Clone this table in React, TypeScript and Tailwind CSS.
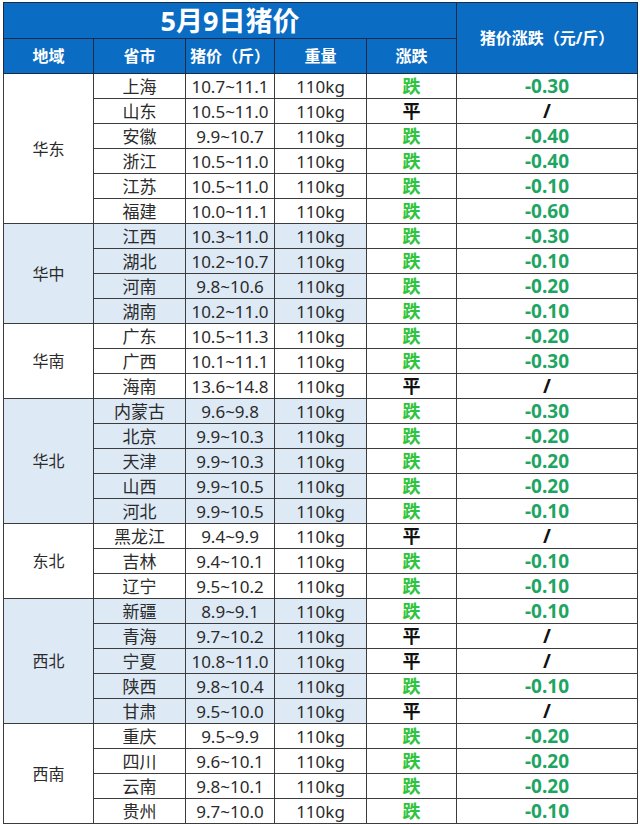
import React from 'react';

type Row = [string, string, boolean, string];

interface Region {
  name: string;
  shaded: boolean;
  rows: Row[];
}

// [province, price range, fell?, change]
const regions: Region[] = [
  {
    name: '华东',
    shaded: false,
    rows: [
      ['上海', '10.7~11.1', true, '-0.30'],
      ['山东', '10.5~11.0', false, '/'],
      ['安徽', '9.9~10.7', true, '-0.40'],
      ['浙江', '10.5~11.0', true, '-0.40'],
      ['江苏', '10.5~11.0', true, '-0.10'],
      ['福建', '10.0~11.1', true, '-0.60'],
    ],
  },
  {
    name: '华中',
    shaded: true,
    rows: [
      ['江西', '10.3~11.0', true, '-0.30'],
      ['湖北', '10.2~10.7', true, '-0.10'],
      ['河南', '9.8~10.6', true, '-0.20'],
      ['湖南', '10.2~11.0', true, '-0.10'],
    ],
  },
  {
    name: '华南',
    shaded: false,
    rows: [
      ['广东', '10.5~11.3', true, '-0.20'],
      ['广西', '10.1~11.1', true, '-0.30'],
      ['海南', '13.6~14.8', false, '/'],
    ],
  },
  {
    name: '华北',
    shaded: true,
    rows: [
      ['内蒙古', '9.6~9.8', true, '-0.30'],
      ['北京', '9.9~10.3', true, '-0.20'],
      ['天津', '9.9~10.3', true, '-0.20'],
      ['山西', '9.9~10.5', true, '-0.20'],
      ['河北', '9.9~10.5', true, '-0.10'],
    ],
  },
  {
    name: '东北',
    shaded: false,
    rows: [
      ['黑龙江', '9.4~9.9', false, '/'],
      ['吉林', '9.4~10.1', true, '-0.10'],
      ['辽宁', '9.5~10.2', true, '-0.10'],
    ],
  },
  {
    name: '西北',
    shaded: true,
    rows: [
      ['新疆', '8.9~9.1', true, '-0.10'],
      ['青海', '9.7~10.2', false, '/'],
      ['宁夏', '10.8~11.0', false, '/'],
      ['陕西', '9.8~10.4', true, '-0.10'],
      ['甘肃', '9.5~10.0', false, '/'],
    ],
  },
  {
    name: '西南',
    shaded: false,
    rows: [
      ['重庆', '9.5~9.9', true, '-0.20'],
      ['四川', '9.6~10.1', true, '-0.20'],
      ['云南', '9.8~10.1', true, '-0.20'],
      ['贵州', '9.7~10.0', true, '-0.10'],
    ],
  },
];

const font = { fontFamily: '"Noto Sans", "Noto Sans CJK SC", sans-serif' };

const App: React.FC = () => {
  return (
    <div className="w-[640px] h-[825px] bg-white pl-[3px] pt-[2px] overflow-hidden" style={font}>
      <table className="table-fixed border-collapse w-[634px] text-center">
        <colgroup>
          <col className="w-[90px]" />
          <col className="w-[92px]" />
          <col className="w-[89px]" />
          <col className="w-[92px]" />
          <col className="w-[90px]" />
          <col className="w-[181px]" />
        </colgroup>
        <thead>
          <tr className="h-[36px]">
            <th colSpan={5} className="bg-[#0b6cc4] border border-[#1e2a44] p-0 text-white text-[27px] font-bold leading-none">
              5月9日猪价
            </th>
            <th rowSpan={2} className="bg-[#0b6cc4] border border-[#1e2a44] p-0 text-white text-[16px] font-bold leading-none">
              猪价涨跌（元/斤）
            </th>
          </tr>
          <tr className="h-[35px] text-white text-[16px] font-bold">
            <th className="bg-[#0b6cc4] border border-[#1e2a44] p-0">地域</th>
            <th className="bg-[#0b6cc4] border border-[#1e2a44] p-0">省市</th>
            <th className="bg-[#0b6cc4] border border-[#1e2a44] p-0">猪价（斤）</th>
            <th className="bg-[#0b6cc4] border border-[#1e2a44] p-0">重量</th>
            <th className="bg-[#0b6cc4] border border-[#1e2a44] p-0">涨跌</th>
          </tr>
        </thead>
        <tbody className="text-[17px] text-[#2b2b2b] leading-none">
          {regions.map((region) =>
            region.rows.map(([city, price, fell, change], i) => {
              const bg = region.shaded ? 'bg-[#dde9f5]' : 'bg-white';
              return (
                <tr key={city} className="h-[25px]">
                  {i === 0 && (
                    <td rowSpan={region.rows.length} className={`${bg} border border-[#3c3c3c] p-0 text-[16px]`}>
                      {region.name}
                    </td>
                  )}
                  <td className={`${bg} border border-[#3c3c3c] p-0`}>{city}</td>
                  <td className={`${bg} border border-[#3c3c3c] p-0`}>{price}</td>
                  <td className={`${bg} border border-[#3c3c3c] p-0`}>110kg</td>
                  <td className={`bg-white border border-[#3c3c3c] p-0 font-bold text-[18px] ${fell ? 'text-[#2fc43c]' : 'text-[#111]'}`}>
                    {fell ? '跌' : '平'}
                  </td>
                  <td className={`bg-white border border-[#3c3c3c] p-0 font-bold text-[19px] ${fell ? 'text-[#1fa563]' : 'text-[#111]'}`}>
                    {change}
                  </td>
                </tr>
              );
            })
          )}
        </tbody>
      </table>
    </div>
  );
};

export default App;
